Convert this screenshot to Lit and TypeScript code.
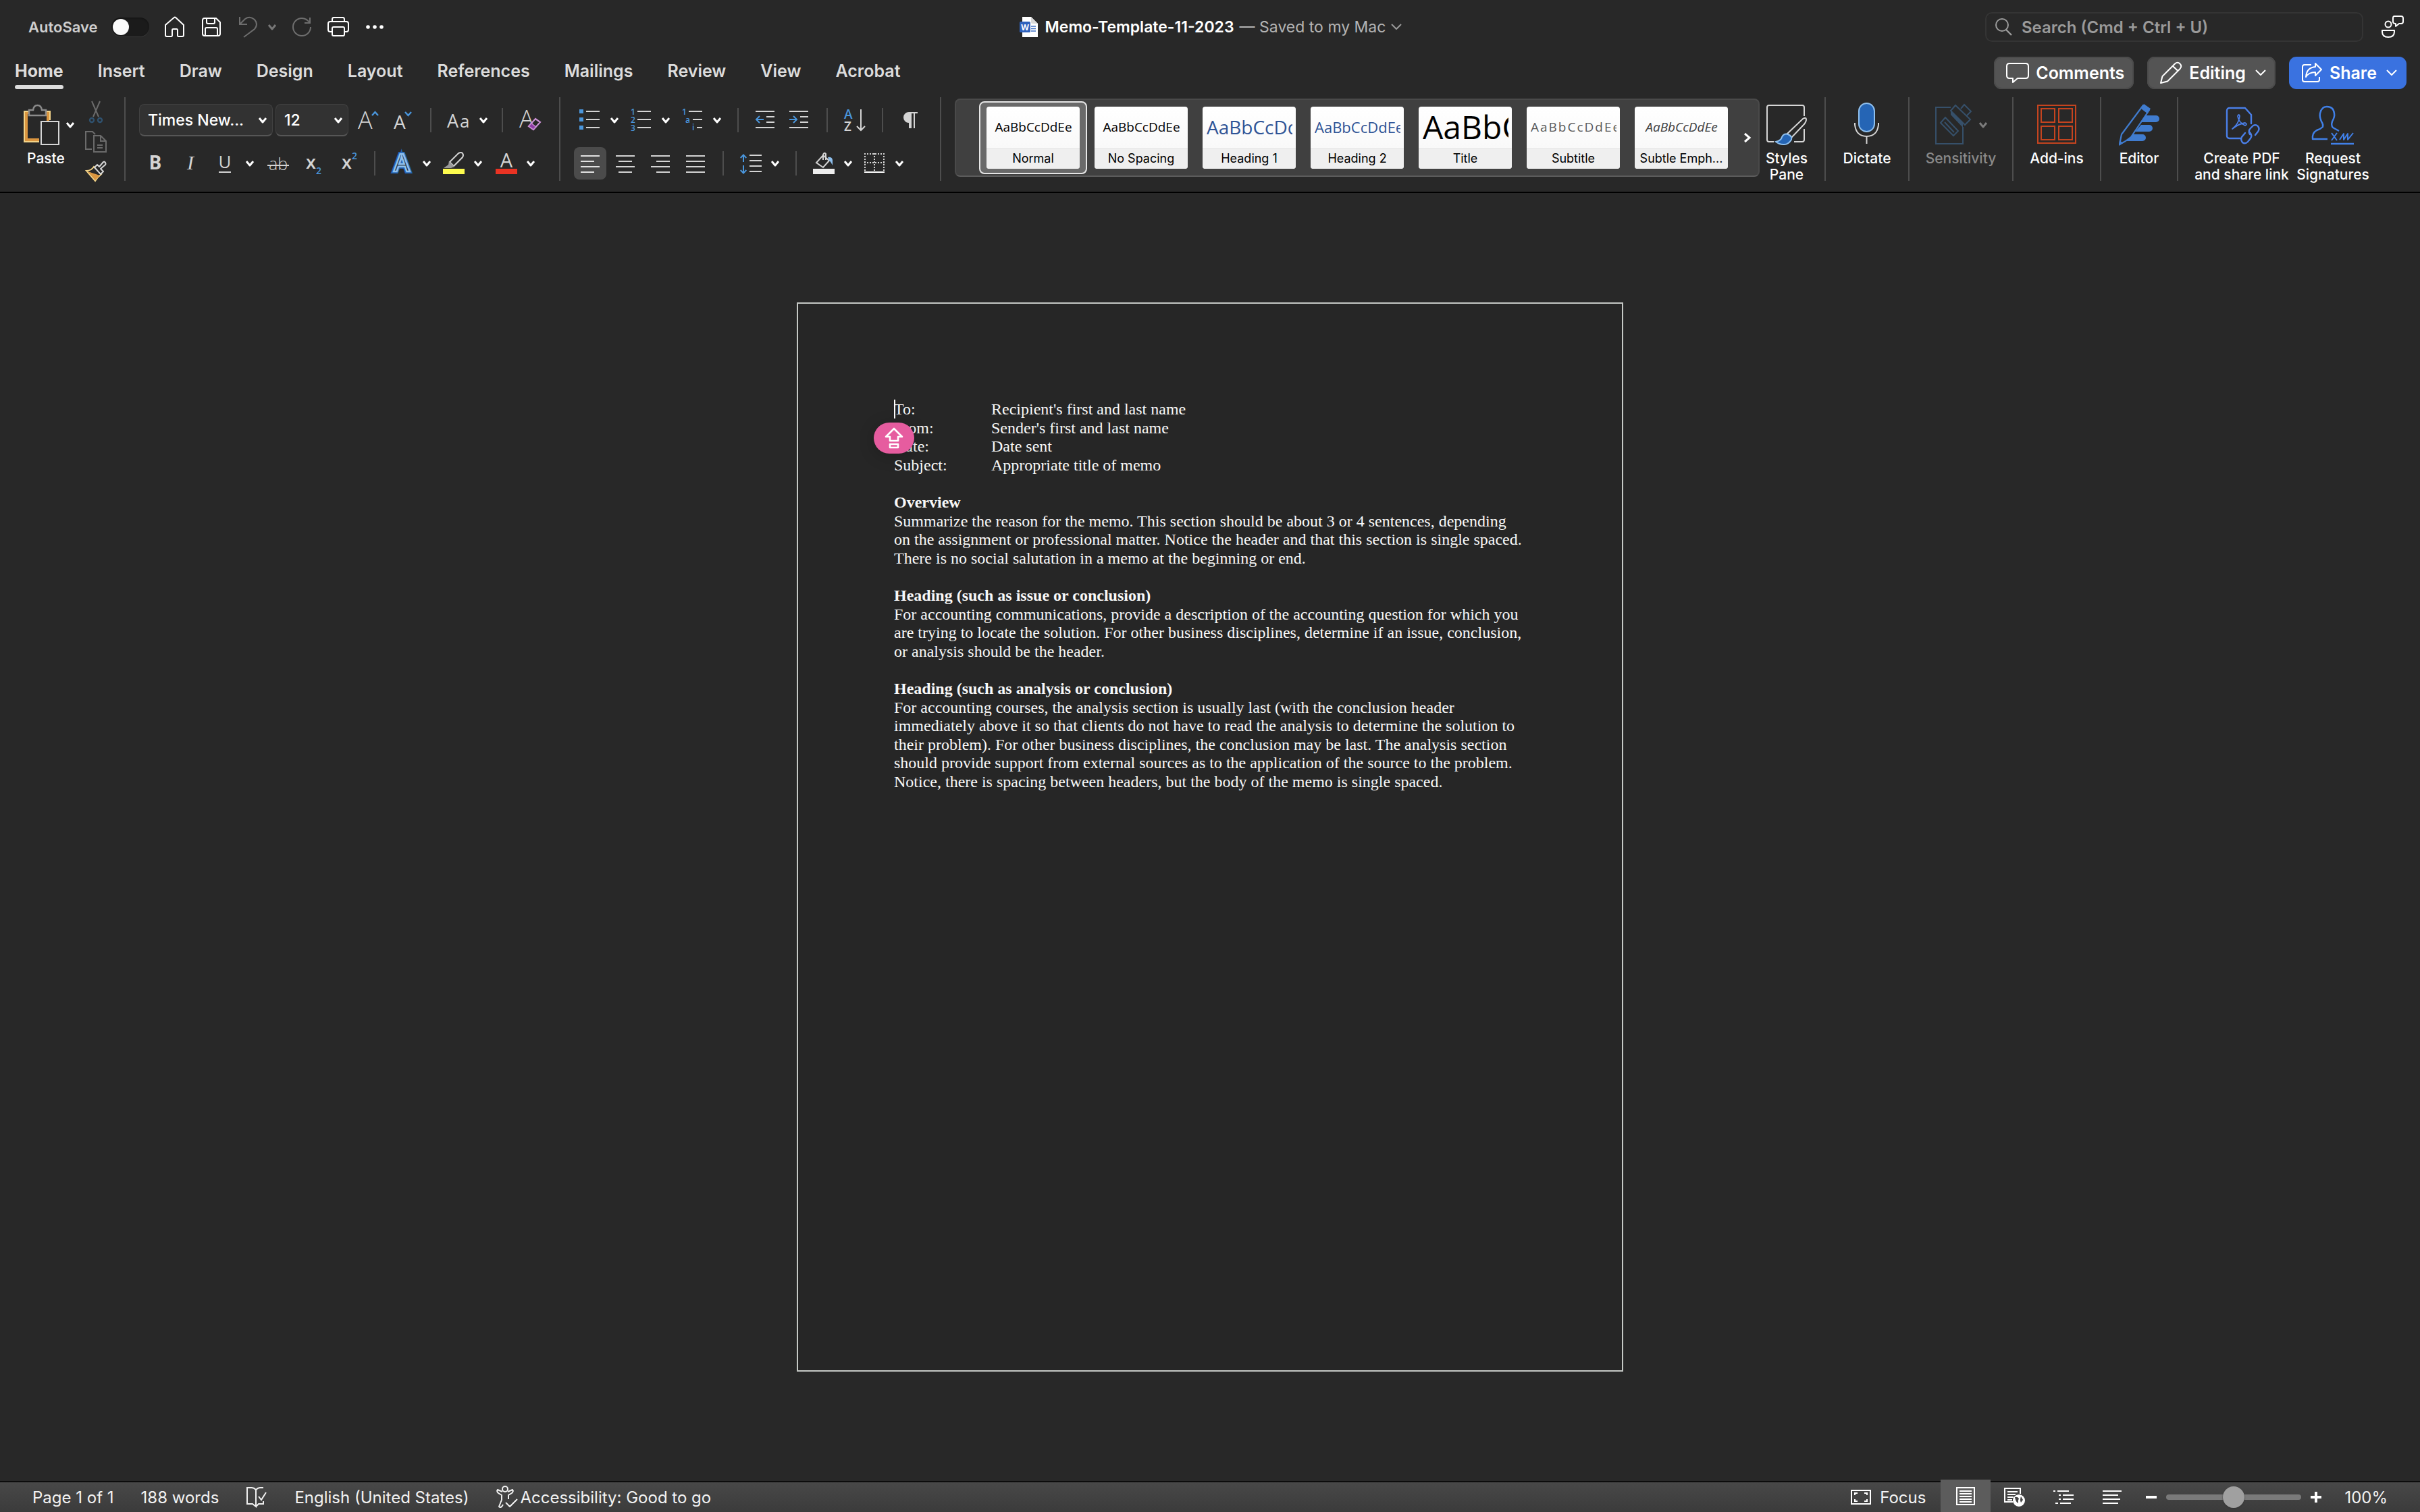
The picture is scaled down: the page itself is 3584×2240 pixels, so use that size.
import { LitElement, html, svg, css, nothing, type TemplateResult } from "lit";
import { customElement } from "lit/decorators.js";
import { classMap } from "lit/directives/class-map.js";

const icon = (w: number, h: number, body: unknown) => html`<svg
  class="icon"
  width=${w}
  height=${h}
  viewBox="0 0 ${w} ${h}"
  fill="none"
  stroke-linecap="butt"
  aria-hidden="true"
>
  ${body}
</svg>`;

const chevron = (color = "#fff") =>
  icon(12, 12, svg`<path d="M1 3 L6 9 L11 3" stroke=${color} stroke-width="3" stroke-linejoin="round"/>`);

const wideChevron = (color = "#fff") =>
  icon(16, 12, svg`<path d="M1 2 L8 9 L15 2" stroke=${color} stroke-width="2" stroke-linejoin="round"/>`);

const G = "#d4d4d4";
const B = "#4a96dc";

const icons = {
  /* Title bar */
  home: icon(32, 32, svg`<path d="M2 13 L14.500 2.200 Q16 1 17.500 2.200 L29 13 V28 Q29 30 27 30 H21.500 Q20 30 20 28.500 V20.500 Q20 19 18.500 19 H13.500 Q12 19 12 20.500 V28.500 Q12 30 10.500 30 H4 Q2 30 2 28 Z" stroke="#fff" stroke-width="2" stroke-linejoin="round"/>`),
  save: icon(32, 32, svg`<path d="M6 3 H23 L29 9 V26 Q29 29 26 29 H6 Q3 29 3 26 V6 Q3 3 6 3 Z M9 3 V9 Q9 11 11 11 H19 Q21 11 21 9 V3 M7 29 V19 Q7 17 9 17 H23 Q25 17 25 19 V29" stroke="#fff" stroke-width="2" stroke-linejoin="round"/>`),
  undo: icon(32, 32, svg`<path d="M4 1 V12 H15 M4.500 11.500 L12 4 Q19 -1 26 5 Q32 12 26 19 L10 31" stroke="#6e6e6e" stroke-width="2"/>`),
  redo: icon(32, 32, svg`<path d="M28 2 V10 H20 M28 10 Q23 3 16 3 A13 13 0 1 0 29 16" stroke="#6e6e6e" stroke-width="2"/>`),
  print: icon(32, 32, svg`<path d="M7 23 H4 Q1 23 1 20 V11 Q1 8 4 8 H28 Q31 8 31 11 V20 Q31 23 28 23 H25 M7 8 V5 Q7 2 9 2 H23 Q25 2 25 5 V8 M9 16 H23 Q25 16 25 18 V27 Q25 29 23 29 H9 Q7 29 7 27 V18 Q7 16 9 16 Z" stroke="#fff" stroke-width="2" stroke-linejoin="round"/>`),
  more: icon(32, 32, svg`<g fill="#fff"><circle cx="6" cy="16" r="2.800"/><circle cx="16" cy="16" r="2.800"/><circle cx="26" cy="16" r="2.800"/></g>`),
  word: icon(28, 30, svg`<path d="M4 0 H17 L27 10 V30 H4 Z" fill="#fff"/><path d="M17 0 L27 10 H19 Q17 10 17 8 Z" fill="#d8d8d8"/><path d="M17 14 H24 M17 17.500 H24 M17 21 H24" stroke="#3d6fc4" stroke-width="1.500"/><rect x="0" y="7" width="16" height="16" rx="1.500" fill="#2f62bd"/><text x="8" y="19.500" text-anchor="middle" font-family="Open Sans, sans-serif" font-weight="700" font-size="12" fill="#fff">W</text>`),
  search: icon(26, 28, svg`<circle cx="11" cy="11" r="9" stroke="#9c9c9c" stroke-width="2"/><path d="M17 18 L25 26" stroke="#9c9c9c" stroke-width="2.400"/>`),
  presence: icon(34, 34, svg`<g stroke="#fff" stroke-width="2" stroke-linejoin="round"><circle cx="11" cy="13" r="4.500"/><path d="M2 22 H20 V24 Q20 32 11 32 Q2 32 2 24 Z M20 1 H30 Q33 1 33 4 V9 Q33 12 30 12 H27 L22 16 V12 Q18 12 18 9 V4 Q18 1 20 1 Z"/></g>`),
  comment: icon(34, 32, svg`<path d="M5 2 H29 Q33 2 33 6 V20 Q33 24 29 24 H17 L10 30 V24 H5 Q1 24 1 20 V6 Q1 2 5 2 Z" stroke="#fff" stroke-width="2" stroke-linejoin="round"/>`),
  pencil: icon(34, 34, svg`<path d="M2 32 L4.500 22 L23 3.500 Q27 0 30.500 3.500 Q34 7 30.500 11 L12 29.500 Z M20 7 L27.500 14" stroke="#fff" stroke-width="2" stroke-linejoin="round"/>`),
  share: icon(32, 32, svg`<path d="M15 4 H5 Q2 4 2 7 V26 Q2 29 5 29 H24 Q27 29 27 26 V22 M21 2 L30 11 L21 20 V15 Q11 15 7 22 Q8 8 21 7 Z" stroke="#fff" stroke-width="2" stroke-linejoin="round"/>`),

  /* Clipboard */
  paste: icon(54, 62, svg`<path d="M1 10 H41 V24 H37 V14 H5 V53 H24 V57 H1 Z" fill="#f3d489"/><path d="M3 12 H39 V26 H35 V15 H7 V51 H24 V55 H3 Z" fill="#db9640"/><path d="M9 17 V9 H15 Q16 2 21.500 2 Q27 2 28 9 H34 V17 Z" fill="#282828" stroke="#8b8b8b" stroke-width="2.500"/><rect x="27" y="26" width="26" height="34" fill="#282828" stroke="#d6d6d6" stroke-width="2"/>`),
  cut: icon(32, 32, svg`<path d="M10 0 L20 23 M22 0 L12 23" stroke="#6b6b6b" stroke-width="2"/><g stroke="#2f516e" stroke-width="2.400"><circle cx="10" cy="28" r="3"/><circle cx="22" cy="28" r="3"/></g>`),
  copy: icon(32, 32, svg`<path d="M10 27 H1 V1 H11 L15 5 M13 31 V7 H23 L31 15 V31 Z M23 7 V15 H31 M18 21 H26 M18 25 H26" stroke="#6b6b6b" stroke-width="2"/>`),
  painter: icon(32, 32, svg`<path d="M2 15 Q9 15 13 9 L24 20 Q18 25 15 30 Z" fill="#282828" stroke="#f3d489" stroke-width="2"/><path d="M4 16 L22 22 L15 29 Z" fill="#db9640"/><path d="M14 10 L18 6 L21 9 L27 2 Q29 1 30 3 Q31 5 30 6 L23 12 L27 16 L23 20 Z" fill="#282828" stroke="#d6d6d6" stroke-width="2" stroke-linejoin="round"/>`),

  /* Font */
  grow: icon(32, 32, svg`<text x="0" y="29" font-family="Open Sans, sans-serif" font-weight="300" font-size="36" fill=${G}>A</text><path d="M21 9 L25.500 4 L30 9" stroke=${B} stroke-width="2.400"/>`),
  shrink: icon(32, 32, svg`<text x="1" y="29" font-family="Open Sans, sans-serif" font-weight="400" font-size="28" fill=${G}>A</text><path d="M18 4 L22.500 9 L27 4" stroke=${B} stroke-width="2.400"/>`),
  textCase: icon(34, 32, svg`<text x="0" y="27" font-family="Open Sans, sans-serif" font-size="27" fill=${G}>A</text><text x="19" y="27" font-family="Open Sans, sans-serif" font-size="26" fill=${G}>a</text>`),
  clear: icon(34, 34, svg`<text x="1" y="28" font-family="Open Sans, sans-serif" font-weight="300" font-size="36" fill=${G}>A</text><path d="M15 26 L25 15 L32 20 L22 31 Z" fill="#282828" stroke="#c88fd2" stroke-width="2.200"/><path d="M15 26 L19 21.500 L25.500 27 L22 31 Z" fill="#8e3aa5" stroke="#c88fd2" stroke-width="1.500"/>`),
  bold: icon(32, 32, svg`<text x="16" y="25" text-anchor="middle" font-family="Open Sans, sans-serif" font-weight="700" font-size="28" fill=${G}>B</text>`),
  italic: icon(32, 32, svg`<text x="16" y="25" text-anchor="middle" font-family="Liberation Serif, serif" font-style="italic" font-size="30" fill=${G}>I</text>`),
  underline: icon(32, 32, svg`<text x="15" y="23" text-anchor="middle" font-family="Open Sans, sans-serif" font-size="26" fill=${G}>U</text><path d="M6 29 H24" stroke=${G} stroke-width="2"/>`),
  strike: icon(32, 32, svg`<text x="16" y="26" text-anchor="middle" font-family="Open Sans, sans-serif" font-weight="300" font-size="25" fill=${G}>ab</text><path d="M0 19 H32" stroke=${G} stroke-width="2"/>`),
  sub: icon(34, 34, svg`<text x="5" y="25" font-family="Open Sans, sans-serif" font-weight="600" font-size="27" fill=${G}>x</text><text x="20" y="33" font-family="Open Sans, sans-serif" font-weight="600" font-size="14" fill=${B}>2</text>`),
  sup: icon(34, 34, svg`<text x="6" y="25" font-family="Open Sans, sans-serif" font-weight="600" font-size="27" fill=${G}>x</text><text x="21" y="11" font-family="Open Sans, sans-serif" font-weight="600" font-size="14" fill=${B}>2</text>`),
  effects: icon(34, 34, svg`<text x="17" y="29" text-anchor="middle" font-family="Open Sans, sans-serif" font-weight="600" font-size="36" fill="#1f5aa6" stroke="#2364b4" stroke-width="6">A</text><text x="17" y="29" text-anchor="middle" font-family="Open Sans, sans-serif" font-weight="600" font-size="36" fill="#24303c" stroke="#8fc0ee" stroke-width="2.500">A</text>`),
  highlight: icon(32, 34, svg`<path d="M10 15 L23 2 Q27 0 29 2 Q31 5 29 8 L16 21 Z" stroke=${G} stroke-width="2"/><path d="M9 14 L17 22 L12 24 H1 L8 19 Z" fill="#9a9a9a"/><rect x="0" y="25" width="32" height="8" fill="#fdfb4e"/>`),
  fontColor: icon(32, 34, svg`<text x="16" y="23" text-anchor="middle" font-family="Open Sans, sans-serif" font-weight="400" font-size="29" fill=${G}>A</text><rect x="0" y="25" width="32" height="8" fill="#ea3323"/>`),

  /* Paragraph */
  bullets: icon(32, 32, svg`<g fill=${B}><rect x="0" y="0" width="6" height="6"/><rect x="0" y="12" width="6" height="6"/><rect x="0" y="24" width="6" height="6"/></g><path d="M10 3 H30 M10 15 H30 M10 27 H30" stroke=${G} stroke-width="2"/>`),
  numbers: icon(32, 34, svg`<g font-family="Open Sans, sans-serif" font-weight="600" font-size="12" fill=${B}><text x="0" y="9">1</text><text x="0" y="21">2</text><text x="0" y="33">3</text></g><path d="M10 4 H30 M10 16 H30 M10 28 H30" stroke=${G} stroke-width="2"/>`),
  multilevel: icon(32, 34, svg`<g font-family="Open Sans, sans-serif" font-weight="600" font-size="12" fill=${B}><text x="0" y="9">1</text><text x="5" y="21">a</text><text x="15" y="32">i</text></g><path d="M10 4 H30 M16 16 H30 M22 28 H30" stroke=${G} stroke-width="2"/>`),
  outdent: icon(32, 32, svg`<path d="M1 3 H29 M17 11 H29 M17 19 H29 M1 27 H29" stroke=${G} stroke-width="2"/><path d="M2 15 H13 M7 10 L2 15 L7 20" stroke=${B} stroke-width="2"/>`),
  indent: icon(32, 32, svg`<path d="M1 3 H29 M17 11 H29 M17 19 H29 M1 27 H29" stroke=${G} stroke-width="2"/><path d="M1 15 H12 M7 10 L12 15 L7 20" stroke=${B} stroke-width="2"/>`),
  sort: icon(34, 34, svg`<g font-family="Open Sans, sans-serif" font-weight="600" font-size="19"><text x="0" y="15" fill=${B}>A</text><text x="0" y="33" fill=${G}>Z</text></g><path d="M25 1 V32 M19 26 L25 32 L31 26" stroke=${G} stroke-width="2"/>`),
  pilcrow: icon(32, 32, svg`<path d="M27 5 H14 A7 7 0 0 0 14 19 H15 V28 M17 5 V28 M22 5 V28" stroke=${G} stroke-width="2"/><path d="M16 5 H14 A7 7 0 0 0 14 19 H16 Z" fill=${G}/>`),
  alignLeft: icon(32, 32, svg`<path d="M2 5 H30 M2 13 H22 M2 21 H30 M2 29 H22" stroke="#e2e2e2" stroke-width="2"/>`),
  alignCenter: icon(32, 32, svg`<path d="M2 5 H30 M6 13 H26 M2 21 H30 M6 29 H26" stroke=${G} stroke-width="2"/>`),
  alignRight: icon(32, 32, svg`<path d="M2 5 H30 M10 13 H30 M2 21 H30 M10 29 H30" stroke=${G} stroke-width="2"/>`),
  justify: icon(32, 32, svg`<path d="M2 5 H30 M2 13 H30 M2 21 H30 M2 29 H30" stroke=${G} stroke-width="2"/>`),
  spacing: icon(32, 32, svg`<path d="M14 4 H32 M14 12 H32 M14 20 H32 M14 28 H32" stroke=${G} stroke-width="2"/><path d="M5 4 V14 M0.700 8 L5 3.500 L9.300 8 M5 19 V30 M0.700 26 L5 30.500 L9.300 26" stroke=${B} stroke-width="2"/>`),
  shading: icon(32, 34, svg`<path d="M14 4 L24 13 L15 23 L5 16 L15 5 V12 M15 5 Q16 0 19 3 V12" stroke=${G} stroke-width="2"/><path d="M22 8 Q28 7 29 12 V20 Q26 14 24 13 Z" fill="#8fc0ee"/><rect x="0" y="25" width="32" height="8" fill="#ededed"/>`),
  borders: icon(32, 34, svg`<path d="M0 3 H30 M0 16 H30" stroke=${G} stroke-width="2" stroke-dasharray="2 2"/><path d="M1 2 V29 M15 2 V29 M29 2 V29" stroke=${G} stroke-width="2" stroke-dasharray="2 2"/><path d="M0 30 H30" stroke="#fff" stroke-width="2"/>`),
  next: icon(12, 16, svg`<path d="M3 2 L10 8 L3 14" stroke="#fff" stroke-width="3"/>`),

  /* Large ribbon commands */
  stylesPane: icon(62, 62, svg`<path d="M57 18 V5 Q57 2 54 2 H5 Q2 2 2 5 V53 Q2 56 5 56 H12 M57 37 V53 Q57 56 54 56 H42" stroke="#d6d6d6" stroke-width="2"/><path d="M31 45 L55 22 Q60 19 60 23 Q60 27 56 31 L38 50 Z" stroke="#d6d6d6" stroke-width="2"/><path d="M15 56 Q23 54 24 49 Q27 43 33 45 Q40 48 38 53 Q33 61 26 60 Q20 60 15 56 Z" fill="#2565b5" stroke="#8fc0ee" stroke-width="2"/>`),
  mic: icon(38, 62, svg`<rect x="7" y="1" width="23" height="42" rx="11.500" fill="#2565b5" stroke="#8fc0ee" stroke-width="2"/><path d="M1 30 V33 Q3 50 18.500 50 Q34 50 36 33 V30 M18.500 50 V61" stroke="#d6d6d6" stroke-width="2"/>`),
  sensitivity: icon(56, 62, svg`<g stroke="#36506a" stroke-width="2"><path d="M24 5 H2 V59 H42 V34"/><path d="M16 20 L35 40 L28 47 L9 28 Z M15 27 L29 42 M31 2 L24 10 L45 31 L53 23 Z M39 7 L44 1 L54 11 L47 18"/></g><path d="M24 10 L42 27 V35 L24 16 Z" fill="#36506a"/>`),
  addins: icon(58, 60, svg`<g stroke="#c5441f" stroke-width="2"><rect x="1" y="1" width="56" height="56"/><rect x="6" y="6" width="20" height="20"/><rect x="32" y="6" width="20" height="20"/><rect x="6" y="32" width="20" height="20"/><rect x="32" y="32" width="20" height="20"/></g>`),
  editor: icon(62, 62, svg`<path d="M40 17 H56 A5 5 0 0 1 56 27 H32 Z M34 31 H46 A5 5 0 0 1 46 41 H25 Z M26 45 H36 A5 5 0 0 1 36 55 H12 L20 45 Z" fill="#407ccf"/><path d="M5 45 L37 2 L46 9 L19 49 Q12 55 2 60 Z" fill="#282828" stroke="#407ccf" stroke-width="2.200" stroke-linejoin="round"/><path d="M36 4 L38 0 L48 7 L43 14 L34 7 Z M1 62 L2 53 Q5 58 9 57 Z" fill="#407ccf"/>`),
  pdf: icon(48, 60, svg`<g stroke="#4a7fe8" stroke-width="2.400" stroke-linecap="round" stroke-linejoin="round"><path d="M22 50 H6 Q2 50 2 46 V9 Q2 5 6 5 H29 L38 15 V28"/><path d="M10 36 Q20 28 21 17 Q20 13 18 17 Q19 26 29 31 Q33 29 29 27 Q20 28 10 36" stroke-width="1.800"/><path d="M36 44 Q33 39 37 35 L41 31 Q45 29 48 32 Q51 36 48 40 L44 45 M36 41 Q40 46 37 50 L33 55 Q29 59 25 56 Q22 52 24 48 L29 42"/></g>`),
  sign: icon(64, 60, svg`<g stroke="#4080e8" stroke-width="2.400" stroke-linejoin="round"><path d="M24 51 H2 Q1 42 8 38 Q14 36 17 33 Q18 29 15 25 Q12 18 13 13 Q15 3 23 3 Q33 3 34 13 Q35 18 31 25 Q29 31 32 34 L41 39"/><path d="M30 42 L38 53 M38 42 L30 53 M42 52 L48 43 V52 L54 43 V52 L62 42" stroke-width="2"/><path d="M29 58 H63"/></g>`),

  /* Status bar */
  proof: icon(32, 32, svg`<path d="M15 5 Q12 2 9 2 H2 V26 H10 L15 30 V5 Q18 2 21 2 H26 M15 30 L19 26 H26 V22 M19 15 L23 20 L30 9" stroke="#f0f0f0" stroke-width="2"/>`),
  access: icon(34, 34, svg`<g stroke="#f0f0f0" stroke-width="2" stroke-linejoin="round"><circle cx="14" cy="5" r="4"/><path d="M10 9 L3 6 Q1 8 4 11 L9 14 V21 L5 31 Q8 34 11 28 M18 9 L25 6 Q27 8 24 11 L19 14 V20 M15 25 L21 31 L32 20"/></g>`),
  focus: icon(32, 24, svg`<path d="M2 2 H30 V22 H2 Z M7 9 V6 H11 M21 6 H25 V9 M25 15 V18 H21 M11 18 H7 V15" stroke="#fff" stroke-width="2"/>`),
  printView: icon(30, 30, svg`<path d="M2 3 H28 V28 H2 Z M6 8 H24 M6 12 H24 M6 16 H24 M6 20 H24 M6 24 H24" stroke="#fff" stroke-width="2"/>`),
  web: icon(34, 30, svg`<path d="M25 10 V2 H2 V22 H14 M6 7 H21 M6 11 H18 M6 15 H15 M6 19 H13" stroke="#fff" stroke-width="2"/><circle cx="23" cy="20" r="9" fill="#fff"/><path d="M17 15 Q21 14 23 17 Q21 20 22 24 Q18 22 17 15 M26 14 L29 19 L26 23 Q24 19 26 14" fill="#444"/>`),
  outline: icon(32, 28, svg`<path d="M1 5 H4 M7 5 H24 M9 11 H12 M15 11 H31 M9 17 H12 M15 17 H31 M4 23 H8 M11 23 H27" stroke="#fff" stroke-width="2"/>`),
  draft: icon(30, 28, svg`<path d="M1 5 H29 M1 11 H24 M1 17 H27 M1 23 H24" stroke="#fff" stroke-width="2"/>`),
  minus: icon(16, 16, svg`<path d="M0 8 H16" stroke="#fff" stroke-width="4"/>`),
  plus: icon(16, 16, svg`<path d="M0 8 H16 M8 0 V16" stroke="#fff" stroke-width="4"/>`),
  capsLock: icon(28, 34, svg`<g stroke="#fff" stroke-width="2.600" stroke-linejoin="round"><path d="M14 3 L26 15 H20 V21 H8 V15 H2 Z"/><rect x="8" y="26" width="12" height="5"/></g>`),
};

interface Tool {
  label: string;
  glyph: TemplateResult;
  menu?: boolean;
}
type RowItem = Tool | "sep";

const tabs = ["Home", "Insert", "Draw", "Design", "Layout", "References", "Mailings", "Review", "View", "Acrobat"];

const fontTop: RowItem[] = [
  { label: "Increase font size", glyph: icons.grow },
  { label: "Decrease font size", glyph: icons.shrink },
  "sep",
  { label: "Change case", glyph: icons.textCase, menu: true },
  "sep",
  { label: "Clear formatting", glyph: icons.clear },
];
const fontBottom: RowItem[] = [
  { label: "Bold", glyph: icons.bold },
  { label: "Italic", glyph: icons.italic },
  { label: "Underline", glyph: icons.underline, menu: true },
  { label: "Strikethrough", glyph: icons.strike },
  { label: "Subscript", glyph: icons.sub },
  { label: "Superscript", glyph: icons.sup },
  "sep",
  { label: "Text effects", glyph: icons.effects, menu: true },
  { label: "Highlight", glyph: icons.highlight, menu: true },
  { label: "Font color", glyph: icons.fontColor, menu: true },
];
const paraTop: RowItem[] = [
  { label: "Bullets", glyph: icons.bullets, menu: true },
  { label: "Numbering", glyph: icons.numbers, menu: true },
  { label: "Multilevel list", glyph: icons.multilevel, menu: true },
  "sep",
  { label: "Decrease indent", glyph: icons.outdent },
  { label: "Increase indent", glyph: icons.indent },
  "sep",
  { label: "Sort", glyph: icons.sort },
  "sep",
  { label: "Show formatting marks", glyph: icons.pilcrow },
];
const paraBottom: RowItem[] = [
  "sep",
  { label: "Line spacing", glyph: icons.spacing, menu: true },
  "sep",
  { label: "Shading", glyph: icons.shading, menu: true },
  { label: "Borders", glyph: icons.borders, menu: true },
];
const aligns: Tool[] = [
  { label: "Align left", glyph: icons.alignLeft },
  { label: "Center", glyph: icons.alignCenter },
  { label: "Align right", glyph: icons.alignRight },
  { label: "Justify", glyph: icons.justify },
];
const styleCards = [
  { name: "Normal", look: "body" },
  { name: "No Spacing", look: "body" },
  { name: "Heading 1", look: "h1" },
  { name: "Heading 2", look: "h2" },
  { name: "Title", look: "title" },
  { name: "Subtitle", look: "subtitle" },
  { name: "Subtle Emph...", look: "emphasis" },
];
const memoHead = [
  ["To:", "Recipient's first and last name"],
  ["From:", "Sender's first and last name"],
  ["Date:", "Date sent"],
  ["Subject:", "Appropriate title of memo"],
];
const memoBody = [
  {
    title: "Overview",
    text: "Summarize the reason for the memo. This section should be about 3 or 4 sentences, depending on the assignment or professional matter. Notice the header and that this section is single spaced. There is no social salutation in a memo at the beginning or end.",
  },
  {
    title: "Heading (such as issue or conclusion)",
    text: "For accounting communications, provide a description of the accounting question for which you are trying to locate the solution. For other business disciplines, determine if an issue, conclusion, or analysis should be the header.",
  },
  {
    title: "Heading (such as analysis or conclusion)",
    text: "For accounting courses, the analysis section is usually last (with the conclusion header immediately above it so that clients do not have to read the analysis to determine the solution to their problem). For other business disciplines, the conclusion may be last. The analysis section should provide support from external sources as to the application of the source to the problem. Notice, there is spacing between headers, but the body of the memo is single spaced.",
  },
];

const base = css`
  :host,
  * {
    box-sizing: border-box;
  }
  button {
    font: inherit;
    color: inherit;
    background: none;
    border: 0;
    padding: 0;
    margin: 0;
    display: flex;
    align-items: center;
  }
  .icon {
    display: block;
    flex: none;
    overflow: visible;
  }
`;

@customElement("word-titlebar")
export class WordTitlebar extends LitElement {
  static styles = [
    base,
    css`
      :host {
        display: grid;
        grid-template-columns: 1fr auto 1fr;
        align-items: center;
        height: 80px;
        padding: 0 24px 0 42px;
      }
      .quick {
        display: flex;
        align-items: center;
        gap: 22px;
      }
      .autosave {
        display: flex;
        align-items: center;
        gap: 20px;
        font-size: 22px;
        font-weight: 600;
        color: #cfcfcf;
      }
      .switch {
        appearance: none;
        margin: 0;
        width: 56px;
        height: 28px;
        border-radius: 14px;
        background: #1b1b1b;
        box-shadow: inset 0 1px 2px #111, 0 1px 1px #3a3a3a;
        display: flex;
        align-items: center;
      }
      .switch::before {
        content: "";
        width: 24px;
        height: 24px;
        margin-left: 2px;
        border-radius: 50%;
        background: #fafafa;
      }
      .undo {
        gap: 14px;
      }
      .document {
        gap: 8px;
        margin-right: 16px;
        font-size: 23px;
        color: #b4b4b4;
      }
      .name {
        padding-left: 2px;
        font-weight: 600;
        color: #fff;
      }
      .right {
        display: flex;
        align-items: center;
        justify-content: flex-end;
        gap: 26px;
      }
      .search {
        display: flex;
        align-items: center;
        gap: 14px;
        width: 560px;
        height: 44px;
        padding: 0 12px;
        border: 2px solid #343434;
        border-radius: 10px;
      }
      .query {
        flex: 1;
        min-width: 0;
        border: 0;
        padding: 0;
        background: none;
        font: 600 24px Inter, sans-serif;
        color: #fff;
        outline: none;
      }
      .query::placeholder {
        color: #9a9a9a;
      }
    `,
  ];
  render() {
    return html`
      <div class="quick">
        <label class="autosave">AutoSave<input class="switch" type="checkbox" role="switch" /></label>
        <button aria-label="Home">${icons.home}</button>
        <button aria-label="Save">${icons.save}</button>
        <button class="undo" aria-label="Undo">${icons.undo}${chevron("#777")}</button>
        <button aria-label="Redo">${icons.redo}</button>
        <button aria-label="Print">${icons.print}</button>
        <button aria-label="More">${icons.more}</button>
      </div>
      <button class="document">
        ${icons.word}<span class="name">Memo-Template-11-2023</span><span>— Saved to my Mac</span>${wideChevron("#9a9a9a")}
      </button>
      <div class="right">
        <label class="search">
          ${icons.search}<input class="query" type="search" aria-label="Search" placeholder="Search (Cmd + Ctrl + U)" />
        </label>
        <button aria-label="Presence">${icons.presence}</button>
      </div>
    `;
  }
}

@customElement("word-tabs")
export class WordTabs extends LitElement {
  static styles = [
    base,
    css`
      :host {
        display: flex;
        align-items: flex-start;
        justify-content: space-between;
        height: 60px;
        padding: 0 20px 0 22px;
      }
      .tabs {
        display: flex;
        gap: 51px;
        padding-top: 10px;
      }
      .tab {
        flex-direction: column;
        align-items: stretch;
        gap: 6px;
        font-size: 25px;
        line-height: 30px;
        font-weight: 600;
        color: #dcdcdc;
      }
      .tab.current {
        font-weight: 700;
      }
      .tab.current::after {
        content: "";
        height: 6px;
        border-radius: 3px;
        background: #dcdcdc;
      }
      .actions {
        display: flex;
        gap: 20px;
        padding-top: 4px;
      }
      .action {
        height: 48px;
        padding: 0 14px 0 18px;
        gap: 10px;
        border-radius: 11px;
        background: #545454;
        box-shadow: inset 0 0 0 2px #4c4c4c;
        font-size: 25px;
        font-weight: 600;
        color: #fff;
      }
      .action .icon:last-child {
        margin-left: 4px;
      }
      .action.primary {
        background: #3a72e0;
        box-shadow: none;
      }
    `,
  ];
  render() {
    return html`
      <nav class="tabs">
        ${tabs.map((t, i) => html`<button class=${classMap({ tab: true, current: i === 0 })}>${t}</button>`)}
      </nav>
      <div class="actions">
        <button class="action">${icons.comment}<span>Comments</span></button>
        <button class="action">${icons.pencil}<span>Editing</span>${wideChevron()}</button>
        <button class="action primary">${icons.share}<span>Share</span>${wideChevron()}</button>
      </div>
    `;
  }
}

@customElement("word-ribbon")
export class WordRibbon extends LitElement {
  static styles = [
    base,
    css`
      :host {
        display: flex;
        height: 146px;
        border-bottom: 2px solid #000;
        color: #fff;
      }
      .divider {
        flex: none;
        width: 2px;
        height: 124px;
        margin-top: 4px;
        background: #4d4d4d;
      }
      .clipboard {
        display: flex;
        gap: 14px;
        padding: 10px 26px 0 34px;
      }
      .paste {
        flex-direction: column;
        align-items: flex-start;
        gap: 7px;
        padding-top: 4px;
        width: 78px;
        height: 97px;
        font-size: 21px;
        line-height: 24px;
        font-weight: 500;
      }
      .paste-icon {
        display: flex;
        align-items: center;
        gap: 10px;
      }
      .paste-label {
        padding-left: 6px;
      }
      .stack {
        display: flex;
        flex-direction: column;
        gap: 12px;
      }
      .group {
        display: flex;
        flex-direction: column;
        gap: 16px;
        padding: 14px 28px 0;
      }
      .group.font {
        padding: 14px 28px 0 20px;
      }
      .row {
        display: flex;
        align-items: center;
        height: 48px;
        gap: 18px;
      }
      .font .row {
        gap: 20px;
      }
      .font .row.letters {
        padding-left: 8px;
      }
      .tool {
        gap: 14px;
        width: 32px;
      }
      .tool.menu {
        width: 58px;
      }
      .bar {
        width: 2px;
        height: 36px;
        margin: 0 6px;
        background: #4d4d4d;
      }
      .font .bar {
        margin: 0 3px;
      }
      .font .letters .bar {
        margin: 0 2px;
      }
      .pickers {
        display: flex;
        gap: 4px;
        margin-right: -6px;
      }
      .picker {
        display: grid;
        align-items: center;
        width: 198px;
        height: 48px;
      }
      .picker.size {
        width: 108px;
      }
      .picker > * {
        grid-area: 1 / 1;
      }
      .picker .icon {
        justify-self: end;
        margin-right: 9px;
        pointer-events: none;
      }
      .select {
        appearance: none;
        width: 100%;
        height: 48px;
        padding: 0 12px;
        border: 1px solid #414141;
        border-bottom: 2px solid #565656;
        border-radius: 8px;
        background: #323232;
        color: #fff;
        font: 500 23px Inter, sans-serif;
      }
      .aligns {
        display: flex;
        gap: 4px;
        margin: 0 -8px;
      }
      .align {
        justify-content: center;
        width: 48px;
        height: 48px;
        border-radius: 8px;
      }
      .align.on {
        background: #4b4b4b;
      }
      .gallery {
        flex: 1;
        min-width: 0;
        display: flex;
        align-items: center;
        height: 116px;
        margin: 6px 0 0 20px;
        padding-left: 34px;
        border: 2px solid #4a4a4a;
        border-bottom-color: #5c5c5c;
        border-radius: 8px;
        background: #404040;
      }
      .cards {
        flex: 1;
        display: flex;
        overflow: hidden;
      }
      .card {
        flex: none;
        width: 160px;
        height: 108px;
        padding: 7px 9px;
        border: 2px solid transparent;
        border-radius: 8px;
      }
      .card.on {
        background: #696969;
        border-color: #e6e6e6;
      }
      .face {
        flex: 1;
        height: 92px;
        display: flex;
        flex-direction: column;
        border-radius: 4px;
        overflow: hidden;
        background: linear-gradient(#fff, #f6f6f6);
        color: #000;
      }
      .sample {
        height: 62px;
        margin: 0 5px 0 6px;
        overflow: hidden;
        white-space: nowrap;
        text-align: center;
        font: 500 19px/60px "Open Sans", sans-serif;
      }
      .h1 {
        font-size: 28px;
        font-weight: 400;
        color: #2f5496;
      }
      .h2 {
        font-size: 22px;
        font-weight: 400;
        color: #2f5496;
      }
      .title {
        font-size: 48px;
        font-weight: 400;
      }
      .subtitle {
        letter-spacing: 2px;
        color: #5a5a5a;
      }
      .emphasis {
        font-style: italic;
        color: #404040;
      }
      .style-name {
        height: 30px;
        border-top: 1px solid #dcdcdc;
        background: #efefef;
        text-align: center;
        font-size: 18px;
        line-height: 27px;
      }
      .next {
        justify-content: center;
        width: 34px;
        height: 108px;
      }
      .commands {
        display: flex;
        padding-right: 52px;
      }
      .big {
        flex: none;
        flex-direction: column;
        height: 134px;
        padding-top: 14px;
        font-size: 21px;
        line-height: 24px;
        font-weight: 500;
        white-space: nowrap;
      }
      .big .pic {
        display: flex;
        align-items: center;
        gap: 10px;
        height: 62px;
        margin-bottom: 7px;
      }
      .big.styles {
        width: 96px;
        padding-right: 16px;
      }
      .big.dictate {
        width: 122px;
        padding-top: 12px;
      }
      .dictate .pic {
        margin-bottom: 9px;
      }
      .big.sensitivity {
        width: 152px;
        color: #8a8a8a;
      }
      .big.addins {
        width: 128px;
      }
      .big.editor {
        width: 112px;
      }
      .big.pdf {
        width: 140px;
      }
      .big.sign {
        width: 106px;
      }
      .acrobat {
        display: flex;
        gap: 12px;
        padding: 0 24px;
      }
    `,
  ];
  private row(items: RowItem[]) {
    return items.map((it) =>
      it === "sep"
        ? html`<span class="bar"></span>`
        : html`<button class=${classMap({ tool: true, menu: !!it.menu })} aria-label=${it.label}>
            ${it.glyph}${it.menu ? chevron() : nothing}
          </button>`
    );
  }
  private big(kind: string, pic: TemplateResult, lines: string[], menu = false) {
    return html`<button class="big ${kind}">
      <span class="pic">${pic}${menu ? chevron("#7c7c7c") : nothing}</span>
      ${lines.map((l) => html`<span>${l}</span>`)}
    </button>`;
  }
  render() {
    const divider = html`<span class="divider"></span>`;
    return html`
      <div class="clipboard">
        <button class="paste">
          <span class="paste-icon">${icons.paste}${chevron()}</span><span class="paste-label">Paste</span>
        </button>
        <div class="stack">
          <button aria-label="Cut">${icons.cut}</button>
          <button aria-label="Copy">${icons.copy}</button>
          <button aria-label="Format painter">${icons.painter}</button>
        </div>
      </div>
      ${divider}
      <div class="group font">
        <div class="row">
          <div class="pickers">
            <label class="picker">
              <select class="select" aria-label="Font">
                <option>Times New...</option></select
              >${chevron()}
            </label>
            <label class="picker size">
              <select class="select" aria-label="Font size">
                <option>12</option></select
              >${chevron()}
            </label>
          </div>
          ${this.row(fontTop)}
        </div>
        <div class="row letters">${this.row(fontBottom)}</div>
      </div>
      ${divider}
      <div class="group">
        <div class="row">${this.row(paraTop)}</div>
        <div class="row">
          <div class="aligns">
            ${aligns.map(
              (a, i) => html`<button class=${classMap({ align: true, on: i === 0 })} aria-label=${a.label}>${a.glyph}</button>`
            )}
          </div>
          ${this.row(paraBottom)}
        </div>
      </div>
      ${divider}
      <div class="gallery">
        <div class="cards">
          ${styleCards.map(
            (c, i) => html`<button class=${classMap({ card: true, on: i === 0 })}>
              <span class="face"><span class="sample ${c.look}">AaBbCcDdEe</span><span class="style-name">${c.name}</span></span>
            </button>`
          )}
        </div>
        <button class="next" aria-label="More styles">${icons.next}</button>
      </div>
      <div class="commands">
        ${this.big("styles", icons.stylesPane, ["Styles", "Pane"])} ${divider}
        ${this.big("dictate", icons.mic, ["Dictate"])} ${divider}
        ${this.big("sensitivity", icons.sensitivity, ["Sensitivity"], true)} ${divider}
        ${this.big("addins", icons.addins, ["Add-ins"])} ${divider}
        ${this.big("editor", icons.editor, ["Editor"])} ${divider}
        <div class="acrobat">
          ${this.big("pdf", icons.pdf, ["Create PDF", "and share link"])}
          ${this.big("sign", icons.sign, ["Request", "Signatures"])}
        </div>
      </div>
    `;
  }
}

@customElement("memo-page")
export class MemoPage extends LitElement {
  static styles = css`
    :host {
      display: block;
      position: relative;
      box-sizing: border-box;
      width: 1224px;
      min-height: 1584px;
      margin: 0 auto;
      padding: 143px 142px;
      border: 2px solid #c6c9c6;
      background: #262626;
      color: #f8f8f8;
      font: 24px/1.15 "Liberation Serif", "Times New Roman", serif;
    }
    .head {
      display: grid;
      grid-template-columns: 144px 1fr;
      margin: 0 0 1lh;
    }
    .value {
      margin: 0;
    }
    .heading {
      margin: 0;
      font-size: 24px;
      font-weight: 700;
    }
    .text {
      margin: 0 0 1lh;
    }
    .caret {
      position: absolute;
      left: 142px;
      top: 142px;
      width: 2px;
      height: 28px;
      background: #fff;
    }
    .badge {
      position: absolute;
      left: 112px;
      top: 176px;
      display: grid;
      place-items: center;
      width: 60px;
      height: 46px;
      border-radius: 23px;
      background: #e65c9f;
      box-shadow: 0 4px 24px rgba(0, 0, 0, 0.2);
    }
  `;
  render() {
    return html`
      <dl class="head">
        ${memoHead.map(([k, v]) => html`<dt>${k}</dt><dd class="value">${v}</dd>`)}
      </dl>
      ${memoBody.map((s) => html`<h2 class="heading">${s.title}</h2><p class="text">${s.text}</p>`)}
      <span class="caret"></span>
      <span class="badge">${icons.capsLock}</span>
    `;
  }
}

@customElement("word-status")
export class WordStatus extends LitElement {
  static styles = [
    base,
    css`
      :host {
        display: flex;
        align-items: stretch;
        justify-content: space-between;
        height: 46px;
        padding: 0 48px;
        border-top: 2px solid #0c0c0c;
        background: linear-gradient(#484848, #3b3b3b);
        color: #f2f2f2;
        font-size: 24px;
      }
      .side {
        display: flex;
        align-items: center;
        gap: 40px;
      }
      .side.view {
        gap: 0;
      }
      .access {
        gap: 2px;
      }
      .focus {
        gap: 12px;
        margin-right: 22px;
      }
      .mode {
        justify-content: center;
        width: 72px;
        height: 100%;
      }
      .mode.on {
        width: 74px;
        height: 48px;
        margin-top: -4px;
        background: #5c5c5c;
      }
      .zoom {
        display: flex;
        align-items: center;
        gap: 14px;
        margin: 0 34px 0 14px;
      }
      .slider {
        appearance: none;
        width: 200px;
        height: 32px;
        margin: 0;
        background: none;
      }
      .slider::-webkit-slider-runnable-track {
        height: 8px;
        border-radius: 4px;
        background: #7a7a7a;
      }
      .slider::-webkit-slider-thumb {
        appearance: none;
        width: 32px;
        height: 32px;
        margin-top: -12px;
        border-radius: 50%;
        background: #a0a0a0;
        box-shadow: 0 1px 2px #333;
      }
    `,
  ];
  render() {
    return html`
      <div class="side">
        <button>Page 1 of 1</button>
        <button>188 words</button>
        <button aria-label="Proofing">${icons.proof}</button>
        <button>English (United States)</button>
        <button class="access">${icons.access}Accessibility: Good to go</button>
      </div>
      <div class="side view">
        <button class="focus">${icons.focus}Focus</button>
        <button class="mode on" aria-label="Print layout">${icons.printView}</button>
        <button class="mode" aria-label="Web layout">${icons.web}</button>
        <button class="mode" aria-label="Outline">${icons.outline}</button>
        <button class="mode" aria-label="Draft">${icons.draft}</button>
        <div class="zoom">
          <button aria-label="Zoom out">${icons.minus}</button>
          <input class="slider" type="range" min="0" max="100" value="50" aria-label="Zoom" />
          <button aria-label="Zoom in">${icons.plus}</button>
        </div>
        <button>100%</button>
      </div>
    `;
  }
}

@customElement("app-root")
export class AppRoot extends LitElement {
  static styles = css`
    :host {
      display: flex;
      flex-direction: column;
      min-height: 100vh;
      background: #282828;
      font-family: Inter, "Liberation Sans", sans-serif;
    }
    .canvas {
      flex: 1;
      padding: 162px 0;
    }
  `;
  render() {
    return html`
      <word-titlebar></word-titlebar>
      <word-tabs></word-tabs>
      <word-ribbon></word-ribbon>
      <main class="canvas"><memo-page></memo-page></main>
      <word-status></word-status>
    `;
  }
}
